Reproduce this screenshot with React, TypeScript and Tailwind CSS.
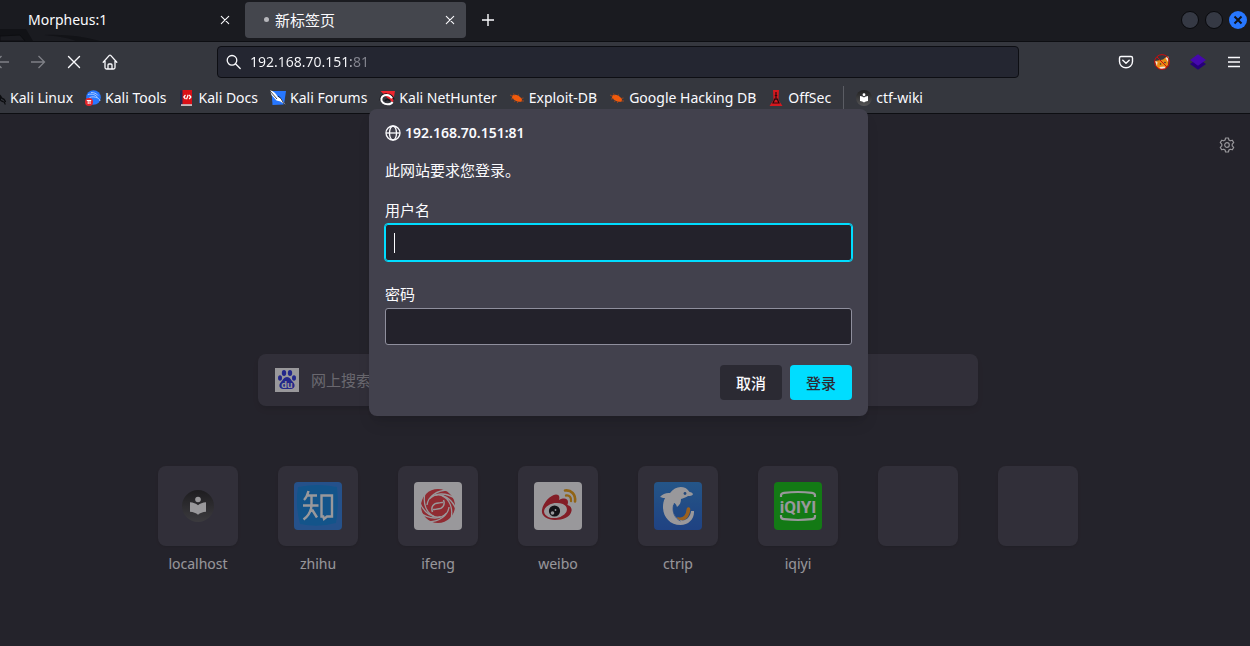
import type { ReactNode } from 'react';

function Svg({ size = 16, box = 16, className, children }: { size?: number; box?: number; className?: string; children: ReactNode }) {
  return (
    <svg width={size} height={size} viewBox={`0 0 ${box} ${box}`} fill="none" className={className} aria-hidden="true">
      {children}
    </svg>
  );
}

function CloseIcon() {
  return (
    <Svg size={16}>
      <path d="M4.300 4.300l7.400 7.400M11.700 4.300l-7.400 7.400" stroke="currentColor" strokeWidth="1.1" strokeLinecap="round" />
    </Svg>
  );
}

function ReaderIcon({ size = 16 }: { size?: number }) {
  return (
    <Svg size={size} box={32}>
      <defs>
        <linearGradient id="reader" x1="0" y1="0" x2="0" y2="1">
          <stop offset="0" stopColor="#202020" />
          <stop offset="1" stopColor="#555557" />
        </linearGradient>
      </defs>
      <circle cx="16" cy="16" r="16" fill="url(#reader)" />
      <circle cx="16" cy="9.5" r="2.8" fill="#fff" />
      <path d="M8 12.2c3.2.2 6 1.200 8 3 2-1.800 4.800-2.800 8-3v9.600c-3.200.2-6 1.200-8 3-2-1.800-4.800-2.800-8-3z" fill="#fff" />
    </Svg>
  );
}

function BugIcon() {
  return (
    <Svg>
      <path d="M3.500 5.500C6 3.800 10 5 12.500 8.500c1 1.500.6 3-.6 3.200C8.500 12.200 4 10 3 7.500c-.3-.8 0-1.500.5-2z" fill="#f15a0c" />
      <path d="M1 5l3 1.500M4.500 3.500l1 2M2 9l2.500-.5M5.500 12l1-2M8.500 13l.3-2M9.500 4.500L9 6M14.500 8l-2.500.5M15 11h-3" stroke="#b04a17" strokeWidth=".8" />
    </Svg>
  );
}

const bookmarks: { name: string; icon: ReactNode }[] = [
  {
    name: 'Kali Linux',
    icon: (
      <Svg>
        <path d="M1 3.500c5-.8 9 1 10.500 4M2 6.500c5-1 8 .5 9.500 1.500 2 .5 3.500 1.500 4 4M11 7.500c-2 2 0 3.500 2 4 1.500.5 2 1.500 2.200 3" stroke="#0b0c0f" strokeWidth="1.3" />
      </Svg>
    ),
  },
  {
    name: 'Kali Tools',
    icon: (
      <Svg>
        <circle cx="8.500" cy="7.500" r="7.300" fill="#2777ff" />
        <path d="M3 4.500c4-1 8 .3 9.500 3M4.500 7.500c3-1.200 6-.6 8 .5 1.500.5 2 1.500 2.500 3M6 2.500c3 0 5.500 1 7 3" stroke="#a9cbff" strokeWidth="1" />
        <circle cx="4" cy="12" r="4" fill="#e5252b" />
        <path d="M1.800 10.500h4.400M3.200 10.500v3.500M5 10.500v3.500" stroke="#fff" strokeWidth="1" />
      </Svg>
    ),
  },
  {
    name: 'Kali Docs',
    icon: (
      <Svg>
        <path d="M1 .5h3V15H1z" fill="#22264d" />
        <path d="M3.500 0H13v14.500H3.500z" fill="#d90f17" />
        <path d="M2 14.300h11v1.500H2z" fill="#e8dadd" />
        <path d="M6.500 5L4.800 7l1.700 2M10.200 5l1.700 2-1.700 2M9.200 4.800L7.500 9.200" stroke="#fff" strokeWidth="1.200" />
      </Svg>
    ),
  },
  {
    name: 'Kali Forums',
    icon: (
      <Svg>
        <path d="M1.500 1H16l-2 13.500L2.500 15z" fill="#2777ff" />
        <path d="M0 .5c4 .5 6 3.500 8 6.500l3 1.500 4.500 6.500-5-3.500-4-1L1.500 5z" fill="#fff" />
        <path d="M0 1l7 8M8 6l3 2.500 3.500 6.500" stroke="#15171d" strokeWidth=".8" />
      </Svg>
    ),
  },
  {
    name: 'Kali NetHunter',
    icon: (
      <Svg>
        <path d="M1.500 1H16l-2 11.500-4-3z" fill="#f0262f" />
        <path d="M1 10.500c0-4.500 3-7 7-6.500 4 .4 6 2.500 7 5.500" stroke="#16171c" strokeWidth="1.400" />
        <path d="M13.500 12c-1.500 3-7 3-9.500.8-2.800-2.500-2-6.500 1.500-7.500 3-.8 6 .2 7.500 3" stroke="#fff" strokeWidth="2" />
        <path d="M6 11c1.500-2 3.500-2 5-.2" stroke="#16171c" strokeWidth="1.800" />
      </Svg>
    ),
  },
  { name: 'Exploit-DB', icon: <BugIcon /> },
  { name: 'Google Hacking DB', icon: <BugIcon /> },
  {
    name: 'OffSec',
    icon: (
      <Svg>
        <path d="M5 0h6l-.5 10 4 6H1.500l4-6z" fill="#d4181f" />
        <path d="M8 2v8M6.800 5.500h2.400M7 8.500L5 13h6L9 8.500" stroke="#2a090c" strokeWidth="1.200" />
      </Svg>
    ),
  },
];

const tile = 'rounded-[4px]';

const topSites: { name: string; icon: ReactNode }[] = [
  { name: 'localhost', icon: <ReaderIcon size={32} /> },
  {
    name: 'zhihu',
    icon: (
      <Svg size={48} box={48} className={tile}>
        <path d="M0 0h48v48H0z" fill="#2d7fe0" />
        <path d="M4 5Q24 1 43 5q2 19-1 36-18 5-36 1Q1 23 4 5z" fill="#0b84e0" />
        <path d="M14.500 9c-1 4-2.500 7-4.500 9M13 13.500h10M9 23.500h15.500M17.500 14v9.500c-.5 6-3 10.500-8 14M18 27.500l5 8M27.500 13.500h10.500v21h-5l-3 2.500-.8-2.500h-1.700z" stroke="#fff" strokeWidth="2.400" />
      </Svg>
    ),
  },
  {
    name: 'ifeng',
    icon: (
      <Svg size={48} box={48} className={tile}>
        <path d="M0 0h48v48H0z" fill="#fff" />
        <circle cx="24" cy="24" r="17" fill="#ee3a40" />
        <g stroke="#fff" strokeWidth="1.300">
          {[0, 35, 70, 105, 180, 215, 250, 285].map((angle) => (
            <path key={angle} d="M13 23C14 15 22 8 35 8" transform={`rotate(${angle} 24 24)`} />
          ))}
        </g>
        <path d="M18.500 30c-2-5 1-9 6-9 2 0 3-1 4.500-.5M29.500 18c2 5-1 9-6 9-2 0-3 1-4.500.5" stroke="#fff" strokeWidth="1.500" />
      </Svg>
    ),
  },
  {
    name: 'weibo',
    icon: (
      <Svg size={48} box={48} className={tile}>
        <path d="M0 0h48v48H0z" fill="#fff" />
        <path d="M8 28c1-7 8-15 14-15.500 3 0 4 2 3 5.500 5-2.500 9-1.500 9 2 0 1.500-.5 2-.5 3 3 .8 4.500 3 4 6C36.500 35 29 38 21 38S7 34 8 28z" fill="#d8202c" />
        <ellipse cx="21.500" cy="28.500" rx="11.500" ry="7.500" transform="rotate(-8 21.500 28.500)" fill="#fff" />
        <circle cx="20.500" cy="29" r="5.600" fill="#0b0b10" />
        <circle cx="18.500" cy="31" r="1.800" fill="#fff" />
        <circle cx="21.500" cy="28" r=".9" fill="#fff" />
        <path d="M31 8.500c6-1 11 4 10 11" stroke="#f0a10c" strokeWidth="2.600" strokeLinecap="round" />
        <path d="M32 13.500c3.500-.5 5.500 2 5 5.500" stroke="#f0a10c" strokeWidth="2.300" strokeLinecap="round" />
      </Svg>
    ),
  },
  {
    name: 'ctrip',
    icon: (
      <Svg size={48} box={48} className={tile}>
        <defs>
          <linearGradient id="ctrip" x1="0" y1="0" x2="0" y2="1">
            <stop offset="0" stopColor="#2b86dc" />
            <stop offset="1" stopColor="#2263d3" />
          </linearGradient>
        </defs>
        <path d="M0 0h48v48H0z" fill="url(#ctrip)" />
        <path d="M24 37c6.500 1.500 10-3.500 10.500-10" stroke="#ff9a1e" strokeWidth="3.600" strokeLinecap="round" />
        <path d="M6 15c2.500-3 6.500-4.500 10-4 4-5.500 10-7.500 15.500-5 2 1 3 3 4 4 2 .3 3.300 1.200 3.500 2.200-.8 1.600-3 1.800-5 1.900-2 1.500-5 2.400-7 2.900 0 3-1 6-4 8-1-3-2-4-3-4-2.500 7 0 14 6 17 6 2 10.500-3.500 11-9h3c.5 8-5.500 14-13.500 14C16 43 9 35 9 25c0-3 .5-6 2-9-2 0-3.500-.5-5-1z" fill="#fff" />
        <path d="M19.500 23c-1.500 7 1 13 7 16" stroke="#2870d8" strokeWidth=".8" />
        <circle cx="31" cy="11.500" r="1.400" fill="#2b6fc4" />
      </Svg>
    ),
  },
  {
    name: 'iqiyi',
    icon: (
      <Svg size={48} box={48} className={tile}>
        <path d="M0 0h48v48H0z" fill="#0bc80b" />
        <path d="M7 15v-1.500C7 11.500 8 11 10 10.800c9-1 19-1 28 0 2 .2 3 .7 3 2.700V15M7 33v1.500c0 2 1 2.500 3 2.700 9 1 19 1 28 0 2-.2 3-.7 3-2.700V33" stroke="#fff" strokeWidth="2.200" />
        <text x="24" y="30.500" textAnchor="middle" fontFamily="Roboto, sans-serif" fontSize="17" fontWeight="700" fill="#fff">iQIYI</text>
      </Svg>
    ),
  },
  { name: '', icon: null },
  { name: '', icon: null },
];

function TabStrip() {
  return (
    <header className="relative flex h-[41px] items-center bg-[#1a1b20] pb-0.5 text-[#fbfbfe]">
      <svg className="absolute left-0 bottom-0" width="110" height="14" viewBox="0 0 110 14" aria-hidden="true">
        <path d="M0 2h26l7 12H0z" fill="#111216" />
        <path d="M0 9l20-1 5 6H0z" fill="#1a1b20" stroke="#0e0f12" />
        <path d="M44 8c20-1 38 1 56 6H76C62 9 52 9 44 8z" fill="#121317" />
      </svg>
      <div className="relative flex h-9 w-[241px] items-center pl-7 pr-2">
        <span className="flex-1 truncate">Morpheus:1</span>
        <button aria-label="关闭 Morpheus:1" className="size-4"><CloseIcon /></button>
      </div>
      <div className="ml-1 flex h-9 w-[221px] items-center rounded-[4px] bg-[#44464d] pl-[19px] pr-2">
        <span className="mr-1.5 size-[5px] rounded-full bg-[#b7b7bc]" />
        <span className="flex-1 truncate text-[15px]">新标签页</span>
        <button aria-label="关闭 新标签页" className="size-4"><CloseIcon /></button>
      </div>
      <button aria-label="打开新标签页" className="ml-[14px] size-4">
        <Svg><path d="M8 2v12M2 8h12" stroke="currentColor" strokeWidth="1.400" /></Svg>
      </button>
      <div className="ml-auto flex gap-1.5 pr-[3px]">
        <button aria-label="最小化" className="size-[18px] rounded-full border border-[#08090c] bg-[#353944]" />
        <button aria-label="最大化" className="size-[18px] rounded-full border border-[#08090c] bg-[#353944]" />
        <button aria-label="关闭窗口" className="flex size-[18px] items-center justify-center rounded-full bg-[#2777ff]">
          <Svg size={10} box={10}><path d="M1.500 1.500l7 7M8.500 1.500l-7 7" stroke="#11131a" strokeWidth="2" /></Svg>
        </button>
      </div>
    </header>
  );
}

function ToolButton({ label, dim, children }: { label: string; dim?: boolean; children: ReactNode }) {
  return (
    <button aria-label={label} disabled={dim} className={dim ? 'flex h-8 w-9 shrink-0 items-center justify-center text-[#7f8087]' : 'flex h-8 w-9 shrink-0 items-center justify-center text-[#fbfbfe]'}>
      {children}
    </button>
  );
}

function Toolbar() {
  return (
    <nav className="-ml-4 -mr-0.5 flex h-10 items-center">
      <ToolButton label="后退" dim>
        <Svg><path d="M15 8H1.500M7.500 2L1.500 8l6 6" stroke="currentColor" strokeWidth="1.300" /></Svg>
      </ToolButton>
      <ToolButton label="前进" dim>
        <Svg><path d="M1 8h13.500M8.500 2l6 6-6 6" stroke="currentColor" strokeWidth="1.300" /></Svg>
      </ToolButton>
      <ToolButton label="停止">
        <Svg><path d="M2.500 2.500l11 11M13.500 2.500l-11 11" stroke="currentColor" strokeWidth="1.400" strokeLinecap="round" /></Svg>
      </ToolButton>
      <ToolButton label="主页">
        <Svg>
          <path d="M1.200 8.200L7.300 1.400q.7-.7 1.400 0l6.100 6.800M3 7v6.500q0 1.500 1.500 1.500h7q1.500 0 1.500-1.500V7M6 15v-4q0-1 1-1h2q1 0 1 1v4" stroke="currentColor" strokeWidth="1.300" strokeLinecap="round" />
        </Svg>
      </ToolButton>
      <div className="mx-[89px] flex h-8 min-w-0 flex-1 items-center gap-2 rounded-[4px] border border-[#0d0e13] bg-[#242631] px-2 text-[#fbfbfe]">
        <Svg className="shrink-0">
          <circle cx="6" cy="6.300" r="4.800" stroke="currentColor" strokeWidth="1.300" />
          <path d="M9.500 9.800l4.700 4.700" stroke="currentColor" strokeWidth="1.300" strokeLinecap="round" />
        </Svg>
        <input
          aria-label="地址栏"
          defaultValue="192.168.70.151:81"
          className="min-w-0 flex-1 bg-[linear-gradient(90deg,#fbfbfe_101px,#84858f_101px)] bg-clip-text text-transparent outline-none"
        />
      </div>
      <ToolButton label="Pocket">
        <Svg>
          <path d="M3 2.500h10q1.500 0 1.500 1.500v3.500a6.500 6.200 0 0 1-13 0V4q0-1.500 1.500-1.500zM4.800 6.200L8 9.300l3.200-3.100" stroke="currentColor" strokeWidth="1.400" strokeLinecap="round" strokeLinejoin="round" />
        </Svg>
      </ToolButton>
      <ToolButton label="FoxyProxy">
        <Svg>
          <path d="M1 7l3-.5 5-1L13.500 2l1 4-.5 5-3 3.500-6 .5-3-3z" fill="#e98b13" />
          <path d="M1 7l2.500 1L3 12zM11.500 4l3-1.500L14 8zM5.500 13l5-.5 1 2-5.500.5z" fill="#f0e6dc" />
          <circle cx="6.500" cy="10" r=".8" fill="#35343b" />
          <circle cx="11" cy="8.500" r=".8" fill="#35343b" />
          <circle cx="8" cy="8" r="7.400" stroke="#cf0c0c" strokeWidth="1" />
          <path d="M3 3l10 10" stroke="#cf0c0c" strokeWidth="1" />
        </Svg>
      </ToolButton>
      <ToolButton label="Wappalyzer">
        <Svg>
          <path d="M0 10l3-2h10l3 2-8 5.700z" fill="#260079" />
          <path d="M8 .3L16 6l-8 5.700L0 6z" fill="#4608ad" />
        </Svg>
      </ToolButton>
      <ToolButton label="菜单">
        <Svg><path d="M2 3.500h12M2 8h12M2 12.500h12" stroke="currentColor" strokeWidth="1.300" /></Svg>
      </ToolButton>
    </nav>
  );
}

function BookmarksBar() {
  return (
    <div className="-ml-[10px] flex h-[31px] items-center gap-3 whitespace-nowrap text-[#fbfbfe]">
      {bookmarks.map((b) => (
        <a key={b.name} href="#" className="flex items-center gap-1">
          {b.icon}
          {b.name}
        </a>
      ))}
      <span className="h-6 w-px bg-[#5b5d64]" />
      <a href="#" className="flex items-center gap-1">
        <ReaderIcon />
        ctf-wiki
      </a>
    </div>
  );
}

function NewTabPage() {
  return (
    <main className="relative flex flex-1 flex-col items-center bg-[#2b2a33] pr-3.5 pt-60 text-[#fbfbfe]">
      <button aria-label="个性化新标签页" className="absolute right-[15px] top-[23px] size-4">
        <Svg>
          <path d="M6.600 1h2.800l.5 2 1.400.8 2-.6 1.400 2.400-1.500 1.500v1.800l1.500 1.500-1.400 2.400-2-.6-1.400.8-.5 2H6.600l-.5-2-1.400-.8-2 .6-1.400-2.400 1.500-1.500V7.100L1.300 5.600l1.400-2.400 2 .6L6.100 3z" stroke="currentColor" strokeWidth="1.200" strokeLinejoin="round" />
          <circle cx="8" cy="8" r="2.300" stroke="currentColor" strokeWidth="1.200" />
        </Svg>
      </button>
      <label className="flex h-[52px] w-full max-w-[720px] items-center gap-3 rounded-lg bg-[#42414d] px-[17px] text-[15px] shadow-md">
        <Svg size={24} box={24} className="shrink-0">
          <path d="M0 0h24v24H0z" fill="#fff" />
          <g fill="#2932e1">
            <ellipse cx="9" cy="5" rx="2.200" ry="3" />
            <ellipse cx="15" cy="5" rx="2.200" ry="3" />
            <ellipse cx="5" cy="10" rx="2" ry="2.800" />
            <ellipse cx="19" cy="10" rx="2" ry="2.800" />
            <path d="M12 9c3 0 4 3 6 5 3 3 1.500 7-2 7H8c-3.500 0-5-4-2-7 2-2 3-5 6-5z" />
          </g>
          <text x="12" y="19.500" textAnchor="middle" fontFamily="Inter, sans-serif" fontSize="9" fontWeight="700" fill="#fff">du</text>
        </Svg>
        <input aria-label="网上搜索" placeholder="网上搜索" className="min-w-0 flex-1 bg-transparent outline-none placeholder:text-[#a9a8b0]" />
      </label>
      <ul className="mt-[60px] flex flex-wrap gap-10">
        {topSites.map((site, i) => (
          <li key={i}>
            <a href="#" aria-label={site.name || '空白'} className="flex w-20 flex-col items-center">
              <span className="flex size-20 items-center justify-center rounded-lg bg-[#42414d] shadow-sm">{site.icon}</span>
              <span className="mt-2 h-5">{site.name}</span>
            </a>
          </li>
        ))}
      </ul>
      <div className="absolute inset-0 bg-[#1c1b22]/45" />
    </main>
  );
}

function LoginDialog() {
  return (
    <div className="absolute inset-x-0 top-[109px] flex justify-center pr-[13px] text-[15px]">
      <form role="dialog" aria-labelledby="login-host" className="w-full max-w-[499px] rounded-lg bg-[#42414d] p-4 text-[#fbfbfe] shadow-lg" onSubmit={(e) => e.preventDefault()}>
        <h1 id="login-host" className="flex items-center gap-1 text-[14px] font-semibold leading-4">
          <Svg>
            <circle cx="8" cy="8" r="7" stroke="currentColor" strokeWidth="1.300" />
            <ellipse cx="8" cy="8" rx="3.500" ry="7" stroke="currentColor" strokeWidth="1.300" />
            <path d="M1 8h14" stroke="currentColor" strokeWidth="1.300" />
          </Svg>
          192.168.70.151:81
        </h1>
        <p className="mt-[19px]">此网站要求您登录。</p>
        <label htmlFor="username" className="mt-5 block">用户名</label>
        <div className="relative mt-1">
          <input id="username" type="text" className="block h-[37px] w-full rounded-[3px] border border-[#00ddff] bg-[#23222b] px-2 outline outline-[#00ddff]" />
          <span className="absolute left-[9px] top-[9px] h-5 w-px bg-[#fbfbfe]" />
        </div>
        <label htmlFor="password" className="mt-[23px] block">密码</label>
        <input id="password" type="password" className="mt-1 block h-[37px] w-full rounded-[3px] border border-[#8f8f9d] bg-[#23222b] px-2 outline-none" />
        <div className="mt-5 flex justify-end gap-2 font-medium">
          <button type="button" className="h-[35px] rounded-[4px] bg-[#2b2a33] px-4">取消</button>
          <button type="submit" className="h-[35px] rounded-[4px] bg-[#00ddff] px-4 text-[#2b2a33]">登录</button>
        </div>
      </form>
    </div>
  );
}

export default function App() {
  return (
    <div className="relative flex min-h-screen flex-col overflow-hidden bg-[#2b2a33] font-['Noto_Sans','Noto_Sans_CJK_SC',sans-serif] text-[14px] leading-5">
      <TabStrip />
      <div className="overflow-hidden border-y border-[#0d0e12] bg-[#35373e]">
        <Toolbar />
        <BookmarksBar />
      </div>
      <NewTabPage />
      <LoginDialog />
    </div>
  );
}
